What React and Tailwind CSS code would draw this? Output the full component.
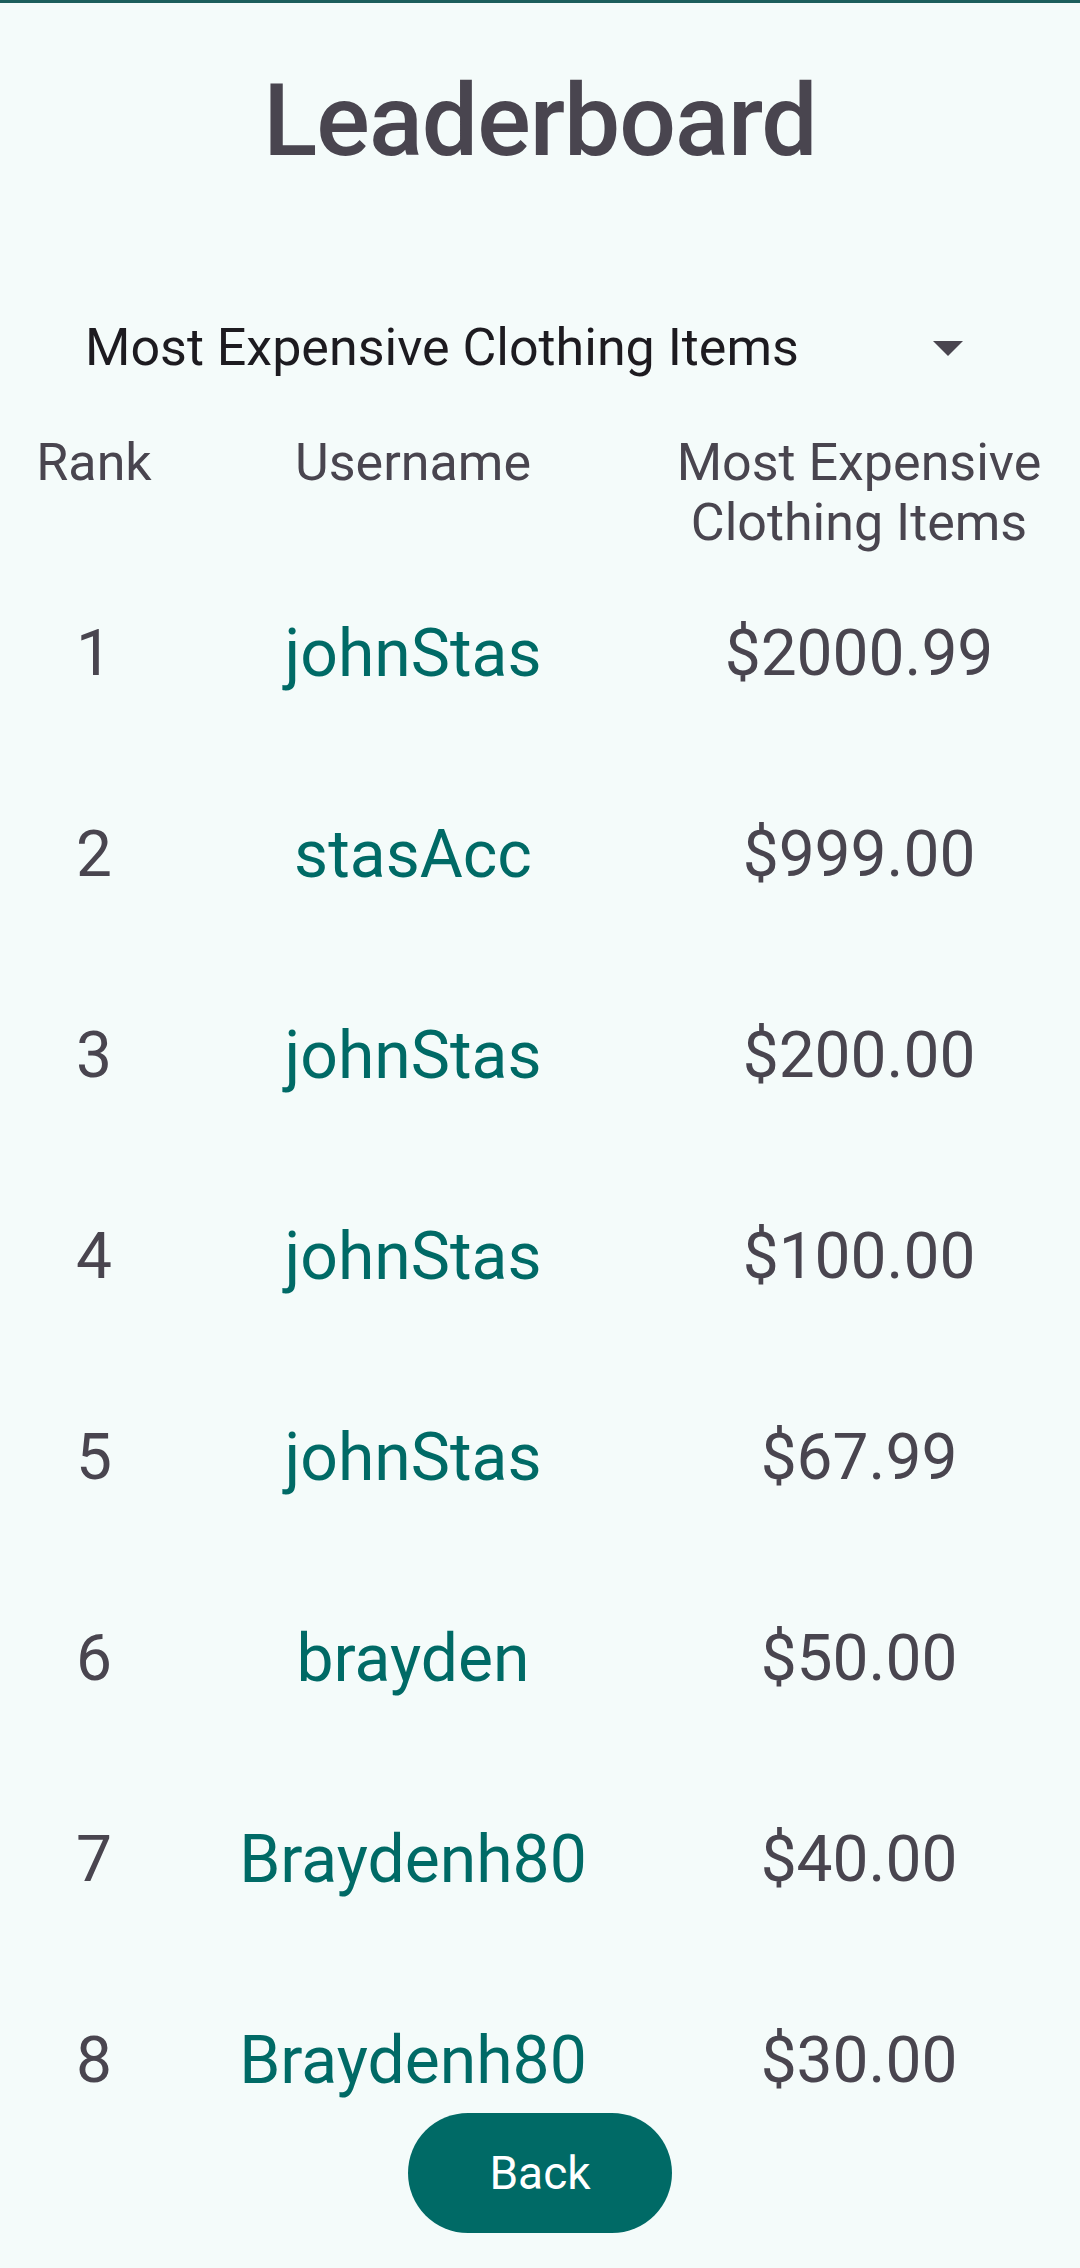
const rows = [
  { rank: 1, user: "johnStas", value: "$2000.99" },
  { rank: 2, user: "stasAcc", value: "$999.00" },
  { rank: 3, user: "johnStas", value: "$200.00" },
  { rank: 4, user: "johnStas", value: "$100.00" },
  { rank: 5, user: "johnStas", value: "$67.99" },
  { rank: 6, user: "brayden", value: "$50.00" },
  { rank: 7, user: "Braydenh80", value: "$40.00" },
  { rank: 8, user: "Braydenh80", value: "$30.00" },
];

export default function App() {
  return (
    <div
      className="w-[1080px] h-[2268px] bg-[#f4fbfa] flex flex-col border-t-[3px] border-[#1c5e5c] overflow-hidden"
      style={{ fontFamily: "Roboto, 'Noto Sans', sans-serif" }}
    >
      <h1 className="mt-[68px] text-center text-[100px] leading-[100px] font-medium text-[#49454f] tracking-[-1px]">
        Leaderboard
      </h1>

      <div className="mt-[142px] flex items-center justify-between pl-[85px] pr-[117px] h-[70px]">
        <span className="text-[52px] leading-[60px] text-[#1d1b20]">Most Expensive Clothing Items</span>
        <svg width="30" height="15" viewBox="0 0 30 15">
          <path d="M0 0 L30 0 L15 15 Z" fill="#49454f" />
        </svg>
      </div>

      <div className="mt-[50px] grid grid-cols-[188px_450px_1fr] text-[52px] leading-[60px] text-[#49454f] text-center">
        <div>Rank</div>
        <div>Username</div>
        <div>Most Expensive Clothing Items</div>
      </div>

      <div className="h-[1552px] overflow-hidden">
        {rows.map((r) => (
          <div key={r.rank} className="grid grid-cols-[188px_450px_1fr] h-[201px] items-center text-center text-[64px]">
            <div className="text-[#49454f]">{r.rank}</div>
            <div className="text-[#006a66] text-[66px]">{r.user}</div>
            <div className="text-[#49454f]">{r.value}</div>
          </div>
        ))}
      </div>

      <div className="mt-[8px] flex justify-center">
        <button className="w-[264px] h-[120px] rounded-full bg-[#006a66] text-white text-[46px]">Back</button>
      </div>
    </div>
  );
}
